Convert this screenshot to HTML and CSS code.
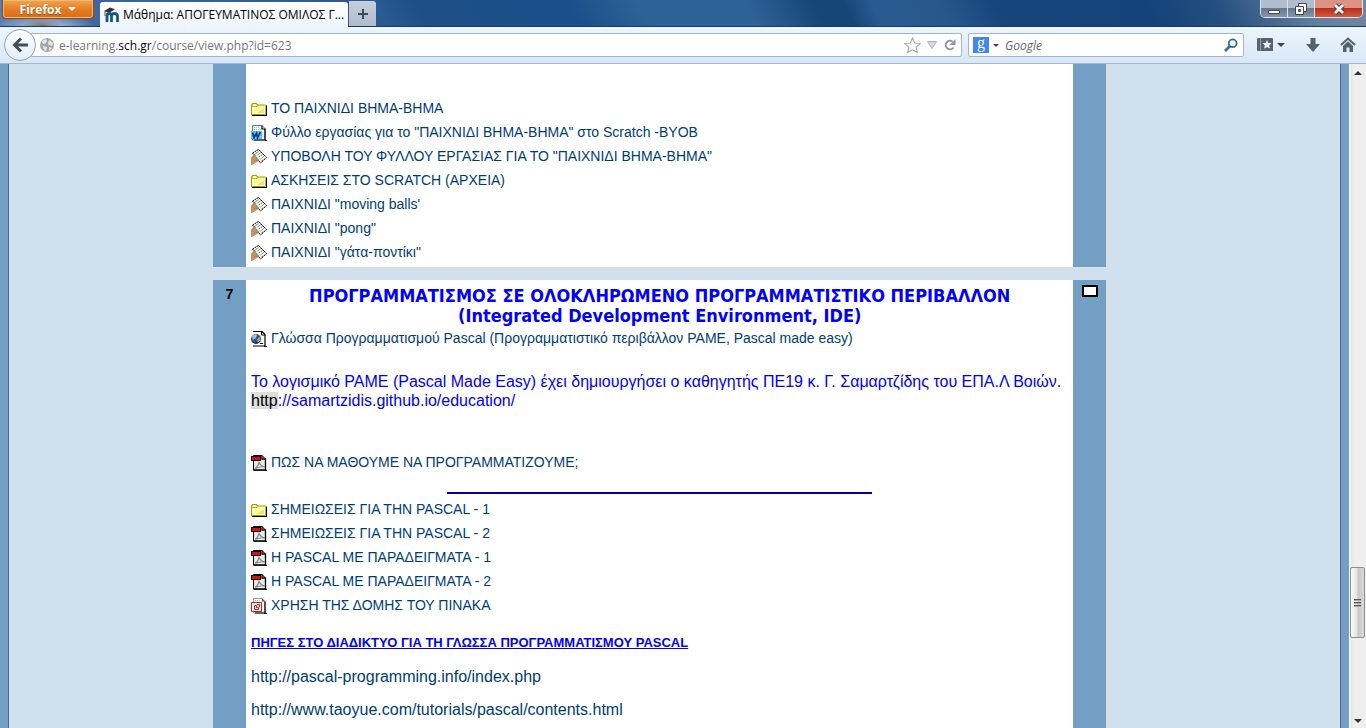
FILE: index.html
```html
<!DOCTYPE html>
<html lang="el">
<head>
<meta charset="utf-8">
<title>Μάθημα: ΑΠΟΓΕΥΜΑΤΙΝΟΣ ΟΜΙΛΟΣ</title>
<link rel="stylesheet" href="styles.css">
</head>
<body>
<svg class="sprites" aria-hidden="true">
  <symbol id="folder" viewBox="0 0 16 16">
    <path d="M0 3.500 1.500 2h4L7 3.500h7.500V14H0z" fill="#9c9c00"/>
    <path d="M1 14.500h14.500V4.500" fill="none" stroke="#000" stroke-width="1.200"/>
    <path d="M1 4.500 2 3h3l1.500 1.500H14V13H1z" fill="#ffff9c"/>
    <path d="M1 5.500h5L7.500 4" fill="none" stroke="#b8b830"/>
    <path d="M13 7v5H6z" fill="#f6d897"/>
    <path d="M1.500 6v6" stroke="#fff"/>
  </symbol>
  <symbol id="word" viewBox="0 0 16 16">
    <path d="M1.500 .5h9.500l3 3v11.500H1.500z" fill="#fff" stroke="#4f7fb5"/>
    <path d="M11 .5v3.500h3V15H3" fill="none" stroke="#000" stroke-width="1.200"/>
    <path d="M14 15.500h2" stroke="#000"/>
    <path d="M3 2.500h6M3 4.500h8M12 7v6" stroke="#9cc4e6" stroke-dasharray="1 1"/>
    <path d="M0 6h11v8H0z" fill="#5cc4f4"/>
    <path d="M1.500 7.500 3 12.500 5.500 8 6.500 12.500 9.500 7" fill="none" stroke="#083a86" stroke-width="1.700"/>
  </symbol>
  <symbol id="hand" viewBox="0 0 16 16">
    <path d="M1.500 4 7.500 .5 15.500 8.500 9.500 14z" fill="#fff" stroke="#000" stroke-dasharray="2 .5"/>
    <path d="M4.500 4.500 7.500 2.700M6.500 6l3.500-2.500M8 8l4-3M9.500 10l4-3M10.500 12l2-1.500" stroke="#444" stroke-dasharray="1.500 .8"/>
    <path d="M0 9.500 4 5l1 1L4.500 8l3.500 2.500-1 1.500-2-1 1.500 2L4 14l-3 2H0z" fill="#c68f5c"/>
    <path d="M4 5 0 9.500M5 11l2 1 1-1.500" fill="none" stroke="#8c5a2c" stroke-width=".7"/>
  </symbol>
  <symbol id="web" viewBox="0 0 16 16">
    <path d="M2 .5h9l3 3V15H2" fill="#fff" stroke="#000" stroke-width="1.200"/>
    <path d="M10.500 .5V4H14M13 15.500h3M9 12.500h3" fill="none" stroke="#000"/>
    <circle cx="5" cy="8" r="5" fill="#27578b"/>
    <path d="M1 5q3-3 5-1L5 7l-3 2z" fill="#aebfcb"/>
    <path d="M6 8l3-2v4l-2 2z" fill="#c6a66b"/>
    <path d="M2 11q4 3 7-1" fill="none" stroke="#142b4d"/>
  </symbol>
  <symbol id="pdf" viewBox="0 0 16 16">
    <path d="M2.500 .5H11l3.500 3.500v11h-12z" fill="#e8e8e8" stroke="#000"/>
    <path d="M11 .5V4h3.500v11.500h1.500M2.500 15.200h12" fill="none" stroke="#000" stroke-width="1.300"/>
    <path d="M0 1h10v5H0z" fill="#000"/>
    <path d="M1 2h8v3H1zM11.500 1 14 3.500h-2.500z" fill="#e20a0a"/>
    <path d="M4 13.500q4-3 4-7 .5 4 6 5.500-5-1-10 1.500" fill="none" stroke="#888" stroke-width="1.100"/>
  </symbol>
  <symbol id="ppt" viewBox="0 0 16 16">
    <path d="M2.500 .5h8.500l3 3V15H2.500z" fill="#fff" stroke="#999"/>
    <path d="M14 3.500V15H4M13 15.500h3" fill="none" stroke="#000" stroke-width="1.200"/>
    <path d="M11 .5 14 3.500h-3z" fill="#c22"/>
    <path d="M4 2.500h5" stroke="#daa" stroke-dasharray="1 1"/>
    <path d="M.5 4.500h10v9H.5z" fill="#fff" stroke="#d51508"/>
    <path d="M5.500 7.500h-2v4h4v-2h-2z" fill="#fff" stroke="#d51508"/>
    <path d="M6 6.500h2.500V9" fill="none" stroke="#d51508"/>
  </symbol>
</svg>

<header class="browser">
  <div class="titlebar">
    <button class="app-menu" type="button">Firefox <span class="caret caret-light"></span></button>
    <div class="tab">
      <svg class="favicon" viewBox="0 0 16 16" aria-hidden="true">
        <path d="M3 15V8M3 9q0-2.500 2.200-2.500T7.500 9v6M7.500 9q.3-2.500 3-2.500T13.500 9v6" fill="none" stroke="#12568b" stroke-width="2.800"/>
        <path d="M0 4 6 .5l5 1.800-5 3.200-3-.5z" fill="#353535"/>
        <path d="M1 4v5" stroke="#555"/>
      </svg>
      <span class="tab-title">Μάθημα: ΑΠΟΓΕΥΜΑΤΙΝΟΣ ΟΜΙΛΟΣ Γ...</span>
    </div>
    <button class="new-tab" type="button" aria-label="Νέα καρτέλα"><svg viewBox="0 0 12 12"><path d="M6 1v10M1 6h10" stroke="#3d4a59" stroke-width="2"/></svg></button>
    <div class="window-controls">
      <button type="button" aria-label="Ελαχιστοποίηση"><svg viewBox="0 0 14 14"><path d="M1.500 8.500h11v3h-11z" fill="#fff" stroke="#445"/></svg></button>
      <button type="button" aria-label="Επαναφορά"><svg viewBox="0 0 14 14"><path d="M4.500 1.500h8v8h-8z" fill="#fff" stroke="#445"/><path d="M1.500 4.500h8v8h-8z" fill="#fff" stroke="#445"/><path d="M4.500 7.500h2v2h-2z" fill="#889" stroke="#445"/></svg></button>
      <button class="close" type="button" aria-label="Κλείσιμο"><svg viewBox="0 0 14 14"><path d="M3 3l8 8M11 3l-8 8" stroke="#534" stroke-width="4.600"/><path d="M3 3l8 8M11 3l-8 8" stroke="#fff" stroke-width="2.800"/></svg></button>
    </div>
  </div>
  <nav class="toolbar">
    <button class="back" type="button" aria-label="Πίσω"><svg viewBox="0 0 16 16"><path d="M9 1.500 2.500 8 9 14.500M3 8h13" fill="none" stroke="#414e5c" stroke-width="3"/></svg></button>
    <div class="address">
      <svg class="icon14" viewBox="0 0 14 14" aria-hidden="true"><circle cx="7" cy="7" r="7" fill="#a6a6a6"/><path d="M2 3l3-2 2 1-1 3-3 1zM9 2l4 3-1 3-3-1-1-2zM3 8l4 1-1 4-2-1zM9 9l3 1-3 3z" fill="#e9e9e9"/></svg>
      <a class="url" href="#">e-learning.<b>sch.gr</b>/course/view.php?id=623</a>
      <svg class="star" viewBox="0 0 16 16" aria-hidden="true"><path d="M8 1l2.100 4.700 5.200.5-3.900 3.400 1.200 5L8 12l-4.600 2.600 1.200-5L.7 6.200l5.200-.5z" fill="#f8f8f8" stroke="#aaa"/></svg>
      <svg class="drop" viewBox="0 0 10 8" aria-hidden="true"><path d="M.5 .5h9L5 7.500z" fill="#d4dae0" stroke="#a8b2bd"/></svg>
      <svg class="icon12" viewBox="0 0 12 12" aria-hidden="true"><path d="M9.500 8.500A4.300 4.300 0 1 1 8.500 2.500" fill="none" stroke="#8b98a7" stroke-width="2"/><path d="M11.500 0v6h-6z" fill="#8b98a7"/></svg>
    </div>
    <div class="search">
      <span class="engine">g</span><span class="caret"></span>
      <input type="text" placeholder="Google" aria-label="Αναζήτηση Google">
      <svg class="icon14" viewBox="0 0 14 14" aria-hidden="true"><circle cx="8.700" cy="5.300" r="3.900" fill="none" stroke="#316ba8" stroke-width="1.800"/><path d="M6 8l-5 5" stroke="#316ba8" stroke-width="2.600"/></svg>
    </div>
    <div class="actions">
      <button type="button" aria-label="Σελιδοδείκτες"><svg class="icon16" viewBox="0 0 16 16"><path d="M1 1h14a1 1 0 0 1 1 1v12H1a1 1 0 0 1-1-1V2z" fill="#566270"/><path d="M3.500 1v13" stroke="#97a1ac"/><path d="M10 3l1.300 2.900 3.200.3-2.400 2.100.7 3.200L10 9.900l-2.800 1.600.7-3.200-2.400-2.100 3.200-.3z" fill="#fff"/></svg><span class="caret"></span></button>
      <button type="button" aria-label="Λήψεις"><svg class="icon14" viewBox="0 0 14 14"><path d="M4.500 0h5v6H14l-7 8-7-8h4.500z" fill="#54606e"/></svg></button>
      <button type="button" aria-label="Αρχική"><svg class="icon16" viewBox="0 0 16 16"><path d="M1 8l7-6.500L15 8" fill="none" stroke="#54606e" stroke-width="2"/><path d="M3 9l5-4.700L13 9v6h-3.500v-4.500h-3V15H3z" fill="#54606e"/></svg></button>
    </div>
  </nav>
</header>

<div class="viewport">
  <div class="page">
    <main class="course">
      <section class="topic">
        <div class="side"></div>
        <div class="content content-first">
          <ul class="resources">
            <li><svg class="res"><use href="#folder"/></svg><a href="#">ΤΟ ΠΑΙΧΝΙΔΙ ΒΗΜΑ-ΒΗΜΑ</a></li>
            <li><svg class="res"><use href="#word"/></svg><a href="#">Φύλλο εργασίας για το "ΠΑΙΧΝΙΔΙ ΒΗΜΑ-ΒΗΜΑ" στο Scratch -BYOB</a></li>
            <li><svg class="res"><use href="#hand"/></svg><a href="#">ΥΠΟΒΟΛΗ ΤΟΥ ΦΥΛΛΟΥ ΕΡΓΑΣΙΑΣ ΓΙΑ ΤΟ "ΠΑΙΧΝΙΔΙ ΒΗΜΑ-ΒΗΜΑ"</a></li>
            <li><svg class="res"><use href="#folder"/></svg><a href="#">ΑΣΚΗΣΕΙΣ ΣΤΟ SCRATCH (ΑΡΧΕΙΑ)</a></li>
            <li><svg class="res"><use href="#hand"/></svg><a href="#">ΠΑΙΧΝΙΔΙ "moving balls'</a></li>
            <li><svg class="res"><use href="#hand"/></svg><a href="#">ΠΑΙΧΝΙΔΙ "pong"</a></li>
            <li><svg class="res"><use href="#hand"/></svg><a href="#">ΠΑΙΧΝΙΔΙ "γάτα-ποντίκι"</a></li>
          </ul>
        </div>
        <div class="side"></div>
      </section>
      <section class="topic">
        <div class="side">7</div>
        <div class="content">
          <h2>ΠΡΟΓΡΑΜΜΑΤΙΣΜΟΣ ΣΕ ΟΛΟΚΛΗΡΩΜΕΝΟ ΠΡΟΓΡΑΜΜΑΤΙΣΤΙΚΟ ΠΕΡΙΒΑΛΛΟΝ<br>(Integrated Development Environment, IDE)</h2>
          <ul class="resources">
            <li><svg class="res"><use href="#web"/></svg><a href="#">Γλώσσα Προγραμματισμού Pascal (Προγραμματιστικό περιβάλλον PAME, Pascal made easy)</a></li>
          </ul>
          <p class="note">Το λογισμικό PAME (Pascal Made Easy) έχει δημιουργήσει ο καθηγητής ΠΕ19 κ. Γ. Σαμαρτζίδης του ΕΠΑ.Λ Βοιών.<br><mark>http</mark>://samartzidis.github.io/education/</p>
          <ul class="resources">
            <li><svg class="res"><use href="#pdf"/></svg><a href="#">ΠΩΣ ΝΑ ΜΑΘΟΥΜΕ ΝΑ ΠΡΟΓΡΑΜΜΑΤΙΖΟΥΜΕ;</a></li>
          </ul>
          <hr>
          <ul class="resources">
            <li><svg class="res"><use href="#folder"/></svg><a href="#">ΣΗΜΕΙΩΣΕΙΣ ΓΙΑ ΤΗΝ PASCAL - 1</a></li>
            <li><svg class="res"><use href="#pdf"/></svg><a href="#">ΣΗΜΕΙΩΣΕΙΣ ΓΙΑ ΤΗΝ PASCAL - 2</a></li>
            <li><svg class="res"><use href="#pdf"/></svg><a href="#">Η PASCAL ΜΕ ΠΑΡΑΔΕΙΓΜΑΤΑ - 1</a></li>
            <li><svg class="res"><use href="#pdf"/></svg><a href="#">Η PASCAL ΜΕ ΠΑΡΑΔΕΙΓΜΑΤΑ - 2</a></li>
            <li><svg class="res"><use href="#ppt"/></svg><a href="#">ΧΡΗΣΗ ΤΗΣ ΔΟΜΗΣ ΤΟΥ ΠΙΝΑΚΑ</a></li>
          </ul>
          <h3>ΠΗΓΕΣ ΣΤΟ ΔΙΑΔΙΚΤΥΟ ΓΙΑ ΤΗ ΓΛΩΣΣΑ ΠΡΟΓΡΑΜΜΑΤΙΣΜΟΥ PASCAL</h3>
          <p class="source"><a href="#">http://pascal-programming.info/index.php</a></p>
          <p class="source"><a href="#">http://www.taoyue.com/tutorials/pascal/contents.html</a></p>
        </div>
        <div class="side"><button class="show-one" type="button" aria-label="Εμφάνιση μόνο της ενότητας 7"></button></div>
      </section>
    </main>
  </div>
  <div class="scrollbar" aria-hidden="true">
    <span class="arrow arrow-up"></span>
    <span class="track-above"></span>
    <span class="thumb"><i></i><i></i><i></i></span>
    <span class="track-below"></span>
    <span class="arrow arrow-down"></span>
  </div>
</div>
</body>
</html>
```

FILE: styles.css
```css
* { box-sizing: border-box; }
body {
  margin: 0;
  height: 100vh;
  overflow: hidden;
  display: flex;
  flex-direction: column;
  font-family: "Liberation Sans", Arial, sans-serif;
  font-size: 14px;
}
button { font: inherit; border: 0; padding: 0; background: none; }
a { color: #003d75; text-decoration: none; }
svg { display: block; flex: none; }
.sprites { position: absolute; width: 0; height: 0; }

/* Browser frame */
.browser { flex: none; font-family: "Open Sans", "Noto Sans", sans-serif; font-size: 12px; }
.titlebar {
  display: flex;
  align-items: flex-end;
  height: 27px;
  padding-left: 2px;
  border-bottom: 1px solid #1b3a60;
  background:
    radial-gradient(ellipse 20px 8px at 42px 26px, #77716f, transparent),
    radial-gradient(ellipse 50px 14px at 45px 27px, #b9cbe2, transparent),
    linear-gradient(65deg, transparent 27%, #2a5b94 28%, #1d5086 31%, #1a4f8a 42%, #2d6296 47%, #2d6296 55%, #164577 60%, #164577 62%, #295b90 64%, #28588b 69%, #17447a 73%, #15427a 84%, #244f7f 89%, #6581a0 96%, #70879f),
    linear-gradient(90deg, #5b7cae, #3d659c 8%, #2d578e 28%, #1a4f8a);
}
.app-menu {
  align-self: flex-start;
  display: flex;
  align-items: center;
  justify-content: center;
  gap: 7px;
  width: 92px;
  height: 19px;
  margin-right: 6px;
  color: #fff;
  font-weight: bold;
  text-shadow: 0 1px 1px #9a4c08;
  border: 1px solid #8c4a16;
  border-top: 0;
  border-radius: 0 0 4px 4px;
  background: linear-gradient(#efa552, #e57b1e 55%, #dc6c11);
  box-shadow: inset 0 0 0 1px #f3b777;
}
.caret { border: 4px solid transparent; border-top-color: #3c4650; border-bottom: 0; }
.caret-light { border-top-color: #fff; }
.tab {
  display: flex;
  align-items: center;
  gap: 3px;
  width: 248px;
  height: 25px;
  margin-bottom: -1px;
  padding: 0 4px;
  background: linear-gradient(#fff, #edf4fc);
  border-radius: 3px 3px 0 0;
}
.tab-title { white-space: nowrap; }
.favicon { width: 16px; height: 16px; }
.new-tab {
  display: flex;
  align-items: center;
  justify-content: center;
  width: 27px;
  height: 25px;
  margin-left: 1px;
  background: linear-gradient(#c6d0dc, #b0bccb);
  border-radius: 0 3px 0 0;
}
.new-tab svg { width: 12px; height: 12px; }
.window-controls {
  align-self: flex-start;
  display: flex;
  height: 18px;
  margin-left: auto;
  margin-right: 3px;
  border: 1px solid #dbe4ee;
  border-top: 0;
  border-radius: 0 0 5px 5px;
  overflow: hidden;
}
.window-controls button {
  display: flex;
  align-items: center;
  justify-content: center;
  width: 27px;
  border-right: 1px solid #dbe4ee;
  background: linear-gradient(#b0bdcc 45%, #65798f 50%, #8496aa);
}
.window-controls .close { width: 47px; border: 0; background: linear-gradient(#dc9384 45%, #b9301a 50%, #d5593c); }
.window-controls svg { width: 14px; height: 14px; }
.toolbar {
  display: flex;
  align-items: center;
  height: 37px;
  padding-left: 4px;
  background: linear-gradient(#edf5fd, #d9e7f7);
  border-bottom: 1px solid #a4b9d1;
}
.back {
  display: flex;
  align-items: center;
  justify-content: center;
  flex: none;
  width: 32px;
  height: 32px;
  z-index: 1;
  border: 1px solid #8ea5bf;
  border-radius: 50%;
  background: linear-gradient(#fff, #e4edf7);
}
.back svg { width: 16px; height: 16px; }
.address, .search {
  display: flex;
  align-items: center;
  height: 24px;
  border: 1px solid #a1b6ce;
  border-radius: 2px;
  background: #fff;
}
.address { flex: 1; margin-left: -6px; padding: 0 5px 0 9px; }
.url { flex: 1; margin-left: 5px; color: #777; }
.url b { color: #000; font-weight: normal; }
.icon16 { width: 16px; height: 16px; }
.icon14 { width: 14px; height: 14px; }
.icon12 { width: 12px; height: 12px; }
.star { width: 17px; height: 17px; }
.drop { width: 10px; height: 8px; margin: 0 7px 0 6px; }
.search { width: 276px; margin-left: 6px; padding: 0 5px 0 4px; }
.engine {
  width: 16px;
  height: 16px;
  margin-right: 4px;
  color: #fff;
  background: #4285f4;
  font: 16px/12px "Liberation Serif", serif;
  text-align: center;
}
.search .caret { border-width: 3px; border-bottom: 0; }
.search input {
  flex: 1;
  min-width: 0;
  margin-left: 6px;
  padding: 0;
  border: 0;
  outline: 0;
  font: italic 12px "Open Sans", sans-serif;
}
.search input::placeholder { color: #666; }
.actions { display: flex; justify-content: space-between; width: 99px; margin: 0 10px 0 13px; }
.actions button { display: flex; align-items: center; gap: 4px; }

/* Course page */
.viewport { flex: 1; min-height: 0; display: flex; }
.page {
  flex: 1;
  overflow: hidden;
  border: solid #739fc4;
  border-width: 0 8px;
  background: #d0e1ed;
  box-shadow: inset 1px 0 #466b8c, inset -1px 0 #466b8c;
}
.course { display: flex; flex-direction: column; gap: 12px; width: 67.1%; margin-left: 205px; }
.topic { display: flex; border-right: 1px solid #ddd; border-bottom: 1px solid #ddd; }
.side {
  flex: none;
  width: 33px;
  padding-top: 5px;
  background: #739fc4;
  font-weight: bold;
  line-height: 18px;
  text-align: center;
}
.show-one { display: block; width: 16px; height: 12px; margin: 0 auto; border: 2px solid #000; background: #fff; }
.content { flex: 1; padding: 6px 5px 3px; background: #fff; }
.content-first { padding-top: 32px; }
.resources { margin: 0; padding: 0; list-style: none; }
.resources li { display: flex; align-items: center; gap: 4px; height: 24px; white-space: nowrap; }
.res { width: 16px; height: 16px; margin-top: 2px; }
h2 {
  margin: 0;
  color: #00f;
  font: bold 18px/20px "DejaVu Sans Condensed", "DejaVu Sans", sans-serif;
  text-align: center;
  white-space: nowrap;
}
.note { margin: 22px 0 40px; color: #00f; font-size: 16px; line-height: 19px; white-space: nowrap; }
mark { color: #000; background: #ddd; }
hr { width: 52%; height: 2px; margin: 18px auto 3px; border: 0; background: #009; }
h3 { margin: 16px 0 14px; color: #00f; font-size: 13px; line-height: 20px; text-decoration: underline; white-space: nowrap; }
.source { margin: 0 0 13px; font-size: 16px; line-height: 20px; }

/* Scrollbar */
.scrollbar {
  display: flex;
  flex-direction: column;
  align-items: center;
  width: 17px;
  padding: 7px 0 5px;
  background: linear-gradient(90deg, #fff, #e6e6e6 2px, #f0f0f0 6px, #eee);
}
.arrow { border: 4px solid transparent; }
.arrow-up { border-top: 0; border-bottom-color: #333; }
.arrow-down { border-bottom: 0; border-top-color: #333; }
.track-above { flex: 489; }
.track-below { flex: 80; }
.thumb {
  display: flex;
  flex-direction: column;
  align-items: center;
  justify-content: center;
  gap: 1px;
  width: 15px;
  height: 71px;
  border: 1px solid #8f8f8f;
  border-radius: 2px;
  background: linear-gradient(90deg, #fafafa, #e4e4e4 45%, #c8c8cb 55%, #d8d8d8);
}
.thumb i { width: 7px; height: 2px; background: #555; border-bottom: 1px solid #aaa; }
```
